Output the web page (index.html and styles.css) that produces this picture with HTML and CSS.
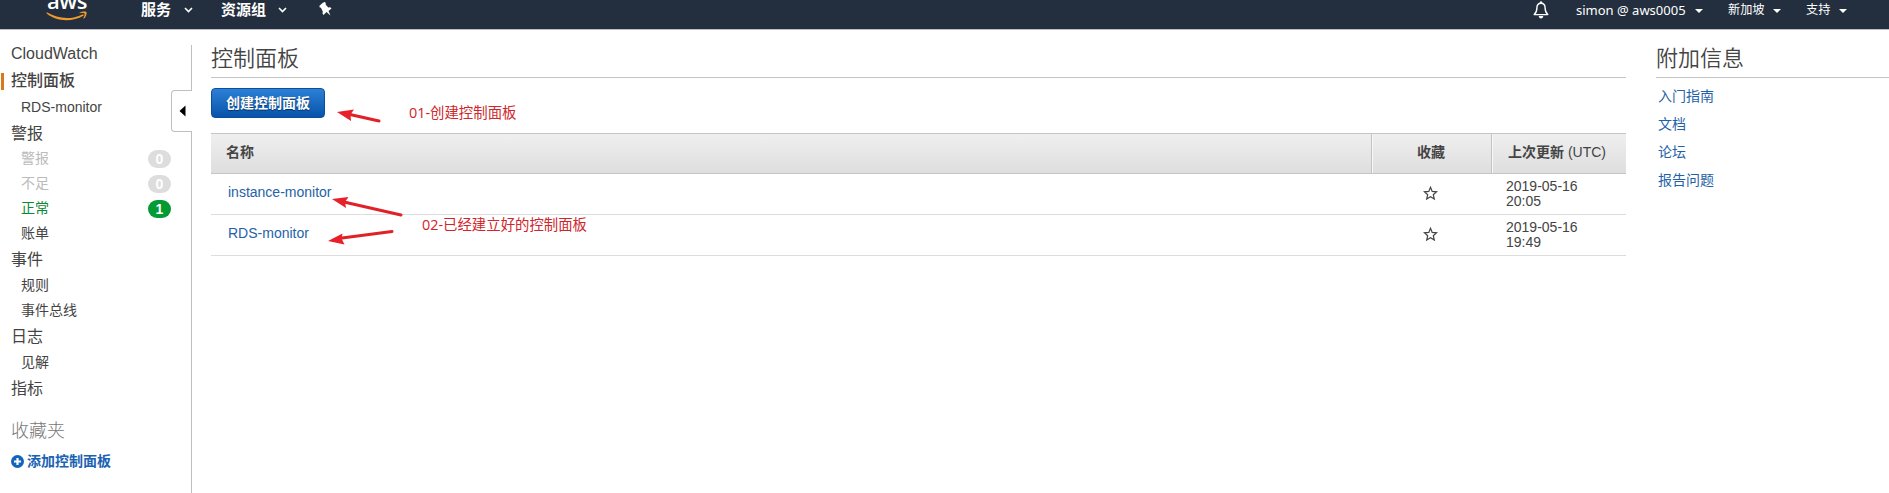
FILE: index.html
```html
<!DOCTYPE html>
<html lang="zh-CN">
<head>
<meta charset="utf-8">
<title>CloudWatch</title>
<link rel="stylesheet" href="styles.css">
</head>
<body>
<header class="topbar">
  <div class="logo"><span class="logo-text">aws</span>
    <svg class="smile" width="42" height="11" viewBox="0 0 42 11"><path d="M.5 2.2C0 1.600.7 1.200 1.300 1.600 12 8 25 9 36.500 3.400 37.600 2.900 38.300 4 37.300 4.700 27 11 10 11 .5 2.200Z" fill="#f19a2c"/><path d="M33.500 1.800C36 .2 39.500.2 40.400.9c.7 1-.2 4.900-2.400 6.700-.4.3-.8 0-.6-.4.6-1.500 1.600-4 1.100-4.800-.5-.7-3-.4-4.700-.1-.5 0-.6-.3-.3-.5Z" fill="#f19a2c"/></svg>
  </div>
  <nav class="menus">
    <span class="menu">服务</span><svg class="chev" width="9" height="6" viewBox="0 0 9 6"><path d="M1 1l3.500 3.500L8 1" fill="none" stroke="#fff" stroke-width="1.600"/></svg>
    <span class="menu second">资源组</span><svg class="chev" width="9" height="6" viewBox="0 0 9 6"><path d="M1 1l3.500 3.500L8 1" fill="none" stroke="#fff" stroke-width="1.600"/></svg>
    <svg class="pin" width="13" height="14" viewBox="0 0 13 14"><path d="M3.800.7 6 .1l.8 1.200-.2 1.200 2.700 3 2-.2 1.200 1.200-3 2.500 2 4.400-4-3.300L4.600 13 3.500 11.500l.3-2L1.900 5.800.5 5.300V3.800Z" fill="#fff"/></svg>
  </nav>
  <div class="account">
    <svg class="bell" width="16" height="18" viewBox="0 0 16 18"><path d="M8 2.200C4.900 2.200 3.900 4.600 3.900 7c0 3.500-.9 5-2.700 6.600h13.600C13 12 12.100 10.500 12.100 7c0-2.400-1-4.800-4.100-4.800Z" fill="none" stroke="#fff" stroke-width="1.400" stroke-linejoin="round"/><circle cx="8" cy="1.500" r="1.200" fill="#fff"/><path d="M5.700 15h4.600c-.2 1.700-1.200 2.500-2.300 2.500S5.900 16.700 5.700 15Z" fill="#fff"/></svg>
    <span class="acct user">simon @ aws0005</span><i class="caret"></i>
    <span class="acct region">新加坡</span><i class="caret"></i>
    <span class="acct support">支持</span><i class="caret"></i>
  </div>
</header>
<div class="page">
  <aside class="sidebar">
    <div class="nav-list">
      <a class="item tall">CloudWatch</a>
      <a class="item active">控制面板</a>
      <a class="item sub mid">RDS-monitor</a>
      <a class="item mid">警报</a>
      <a class="item sub muted">警报<b class="badge">0</b></a>
      <a class="item sub muted">不足<b class="badge">0</b></a>
      <a class="item sub ok">正常<b class="badge on">1</b></a>
      <a class="item sub">账单</a>
      <a class="item mid">事件</a>
      <a class="item sub mid">规则</a>
      <a class="item sub">事件总线</a>
      <a class="item mid">日志</a>
      <a class="item sub mid">见解</a>
      <a class="item mid">指标</a>
      <h2 class="fav">收藏夹</h2>
      <a class="add"><svg width="13" height="13" viewBox="0 0 13 13"><circle cx="6.500" cy="6.500" r="6.500" fill="#1166bb"/><path d="M6.500 3v7M3 6.500h7" stroke="#fff" stroke-width="2.200"/></svg>添加控制面板</a>
    </div>
    <div class="rail">
      <div class="rail-top"></div>
      <div class="handle"><svg width="7" height="12" viewBox="0 0 7 12"><path d="M6.500.5v11L.5 6Z" fill="#000"/></svg></div>
      <div class="rail-rest"></div>
    </div>
  </aside>
  <main class="main">
    <h1 class="title">控制面板</h1>
    <button class="create">创建控制面板</button>
    <div class="table">
      <div class="row head"><div class="cell name">名称</div><div class="cell star">收藏</div><div class="cell date"><span>上次更新 <span class="utc">(UTC)</span></span></div></div>
      <div class="row"><a class="cell name">instance-monitor</a><div class="cell star"><svg width="15" height="15" viewBox="0 0 15 15"><path d="M7.500 1.300 9.200 5.400l4.400.4-3.300 2.900 1 4.400-3.800-2.300-3.800 2.300 1-4.400L1.400 5.800l4.400-.4Z" fill="none" stroke="#444" stroke-width="1.200"/></svg></div><div class="cell date">2019-05-16<br>20:05</div></div>
      <div class="row"><a class="cell name">RDS-monitor</a><div class="cell star"><svg width="15" height="15" viewBox="0 0 15 15"><path d="M7.500 1.300 9.200 5.400l4.400.4-3.300 2.900 1 4.400-3.800-2.300-3.800 2.300 1-4.400L1.400 5.800l4.400-.4Z" fill="none" stroke="#444" stroke-width="1.200"/></svg></div><div class="cell date">2019-05-16<br>19:49</div></div>
    </div>
  </main>
  <section class="info">
    <h1 class="title">附加信息</h1>
    <div class="links"><a>入门指南</a><a>文档</a><a>论坛</a><a>报告问题</a></div>
  </section>
</div>
<svg class="arrows" width="620" height="260" viewBox="0 0 620 260">
  <g stroke="#e02228" stroke-width="3" stroke-linecap="round"><path d="M350 114.500 379 121M344 202 401 215M342 238 392 231.500"/></g>
  <g fill="#e8202a"><path d="M337 112 354 109.500 350.500 114.500 351 121Z"/><path d="M332 199 348.500 197 345 202 346 208Z"/><path d="M328 241 342.500 233.500 341.500 238.500 344.500 244.500Z"/></g>
</svg>
<div class="note note-one">01-创建控制面板</div>
<div class="note note-two">02-已经建立好的控制面板</div>
</body>
</html>
```
FILE: styles.css
```css
* { box-sizing: border-box; }
body {
  margin: 0;
  height: 493px;
  overflow: hidden;
  position: relative;
  background: #fff;
  color: #444;
  font: 14px/15px "Liberation Sans", "Noto Sans CJK SC", sans-serif;
}
.topbar {
  height: 30px;
  display: flex;
  background: #232f3e;
  border-bottom: 1px solid #b9bcc2;
  color: #fff;
  overflow: hidden;
}
.logo { width: 141px; padding-left: 46px; display: flex; flex-direction: column; flex: none; }
.logo-text { font: 600 22px/20px "Open Sans", sans-serif; height: 11px; margin-top: -10px; padding-left: 1px; letter-spacing: -0.5px; }
.smile { display: block; margin-top: 10px; }
.menus { display: flex; height: 17px; align-items: center; }
.menu { font: bold 15px/18px "Noto Sans CJK SC", sans-serif; width: 43px; }
.menu.second { width: 57px; margin-left: 28px; }
.chev { margin-top: 3px; }
.pin { margin: 0 0 0 32px; }
.account { margin-left: auto; display: flex; height: 19px; align-items: center; padding-right: 42px; font: 12.2px/18px "Noto Sans", "Noto Sans CJK SC", sans-serif; }
.bell { margin-right: 27px; }
.user { width: 119px; font-size: 13px; }
.region { width: 45px; margin-left: 25px; }
.support { width: 33px; margin-left: 25px; }
.caret { border: 4px solid transparent; border-top-color: #fff; border-bottom: 0; margin-top: 2px; }

.page { display: flex; height: 463px; }
.sidebar { width: 192px; display: flex; justify-content: space-between; flex: none; }
.nav-list { width: 171px; padding-top: 10px; }
.item { display: flex; align-items: center; height: 27px; padding-left: 11px; font-size: 16px; }
.item.tall { height: 27px; }
.item.mid { height: 26px; }
.item.sub { padding-left: 21px; font-size: 14px; height: 25px; }
.item.sub.mid { height: 26px; }
.item.active { font-weight: 500; height: 27px; background: linear-gradient(#d9791a, #d9791a) 1px 6px / 3px 17px no-repeat; }
.muted { color: #bbb; }
.ok { color: #0a8a35; }
.badge { margin-left: auto; width: 23px; height: 18px; border-radius: 9px; background: #ddd; color: #fff; font-size: 14px; line-height: 18px; text-align: center; }
.badge.on { background: #049a34; }
.fav { margin: 16px 0 0 11px; font-size: 18px; font-weight: 300; line-height: 28px; color: #777; }
.add { display: flex; gap: 3px; align-items: center; margin: 4px 0 0 11px; height: 24px; color: #1a62b3; font-weight: bold; }
.rail { width: 21px; padding-top: 15px; display: flex; flex-direction: column; }
.rail-top { height: 45px; border-right: 1px solid #bfbfbf; }
.handle { height: 42px; border: 1px solid #bfbfbf; border-right: 0; border-radius: 4px 0 0 4px; display: flex; align-items: center; padding-left: 7px; padding-bottom: 1px; }
.rail-rest { flex: 1; border-right: 1px solid #bfbfbf; }

.main { width: 1415px; margin-left: 19px; flex: none; }
.title { margin: 0; height: 48px; padding-top: 15px; border-bottom: 1px solid #c4c4c4; font-size: 22px; line-height: 28px; font-weight: 350; }
.create { display: block; width: 114px; height: 30px; margin: 10px 0 15px; padding: 0; border: 1px solid #0b4f9c; border-radius: 4px; background: linear-gradient(#2c80d6, #0753aa); color: #fff; font: bold 14px/24px "Noto Sans CJK SC", sans-serif; padding-bottom: 2px; text-shadow: 0 1px 1px #063263; }
.row { height: 41px; display: flex; border-bottom: 1px solid #ddd; }
.cell { display: flex; align-items: center; padding-bottom: 1px; }
.name { width: 1160px; padding-left: 17px; color: #1f62a8; padding-bottom: 3px; }
.star { width: 120px; justify-content: center; padding-bottom: 2px; padding-right: 1px; }
.date { width: 135px; padding-left: 15px; }
.head { background: linear-gradient(#efefef, #dedede); border-top: 1px solid #c5c5c5; border-bottom-color: #c5c5c5; font-weight: bold; }
.head .cell { padding-bottom: 3px; }
.head .name { padding-left: 15px; color: #444; }
.head .star, .head .date { border-left: 1px solid #c2c2c2; box-shadow: inset 1px 0 #f8f8f8; }
.head .date { padding-left: 16px; }
.utc { font-weight: normal; }
.info { flex: 1; margin-left: 30px; }
.links { display: flex; flex-direction: column; gap: 8px; padding: 8px 0 0 2px; color: #1f62a8; line-height: 20px; }
.arrows { position: absolute; left: 0; top: 0; }
.note { position: absolute; color: #d0252b; font: 14.4px/20px "Open Sans", "Noto Sans CJK SC", sans-serif; white-space: nowrap; }
.note-one { left: 409px; top: 103px; }
.note-two { left: 422px; top: 215px; }
```
